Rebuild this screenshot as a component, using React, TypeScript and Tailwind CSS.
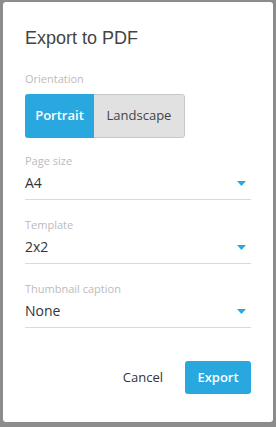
const fields = [
  { label: 'Page size', value: 'A4' },
  { label: 'Template', value: '2x2' },
  { label: 'Thumbnail caption', value: 'None' },
];

const Caret = () => (
  <svg width="9" height="5" viewBox="0 0 9 5" className="shrink-0">
    <path d="M0 0h9L4.5 5z" fill="#29a8e0" />
  </svg>
);

export default function App() {
  return (
    <div className="w-[276px] h-[427px] bg-[#8c8c8c] pt-[2px] pl-[3px] font-['Open_Sans',sans-serif]">
      <div className="w-[270px] h-[420px] bg-white rounded-[3px] px-[22px] pt-[24px] text-[#333]">
        <h1 className="text-[18px] leading-[24px] font-['Liberation_Sans',sans-serif] text-[#444]">
          Export to PDF
        </h1>

        <div className="mt-[22px] text-[11px] leading-[14px] text-[#bbb]">Orientation</div>
        <div className="mt-[8px] flex h-[44px] w-[160px] rounded-[3px] overflow-hidden text-[13px]">
          <button className="w-[69px] bg-[#29a8e0] text-white font-semibold">Portrait</button>
          <button className="flex-1 bg-[#e1e1e1] text-[#444] border border-l-0 border-[#c8c8c8] rounded-r-[3px]">
            Landscape
          </button>
        </div>

        <div className="mt-[16px] flex flex-col gap-[18px]">
          {fields.map((f) => (
            <div key={f.label}>
              <div className="text-[11px] leading-[14px] text-[#bbb]">{f.label}</div>
              <div className="mt-[5px] h-[27px] border-b border-[#bfe3ef] pr-[5px]">
                <div className="flex items-center justify-between h-[20px]">
                  <span className="text-[14px] leading-[20px] text-[#333]">{f.value}</span>
                  <Caret />
                </div>
              </div>
            </div>
          ))}
        </div>

        <div className="mt-[33px] flex justify-end items-center gap-[22px]">
          <button className="text-[13px] text-[#333]">Cancel</button>
          <button className="h-[33px] w-[66px] rounded-[3px] bg-[#29a8e0] text-white text-[13px] font-semibold">
            Export
          </button>
        </div>
      </div>
    </div>
  );
}
